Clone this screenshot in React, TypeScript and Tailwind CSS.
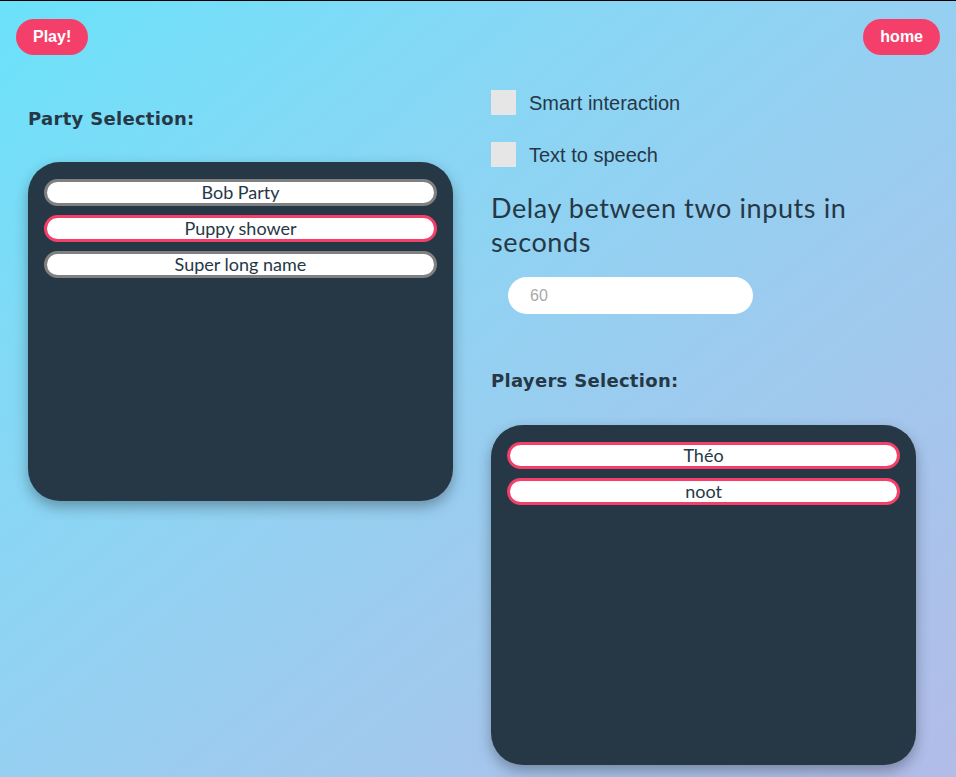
import React from 'react';

const parties = [
  { name: 'Bob Party', selected: false },
  { name: 'Puppy shower', selected: true },
  { name: 'Super long name', selected: false },
];

const players = [
  { name: 'Théo', selected: true },
  { name: 'noot', selected: true },
];

const ListItem: React.FC<{ name: string; selected: boolean }> = ({ name, selected }) => (
  <div
    className={`h-[27px] rounded-full bg-white border-[3px] flex items-center justify-center text-[18px] text-[#263846] ${
      selected ? 'border-[#f43f6a]' : 'border-[#808080]'
    }`}
  >
    {name}
  </div>
);

const Panel: React.FC<{ items: { name: string; selected: boolean }[]; height: string }> = ({ items, height }) => (
  <div className={`w-[425px] ${height} bg-[#263846] rounded-[32px] shadow-[0_6px_14px_rgba(0,0,0,0.3)] px-4 pt-[17px] flex flex-col gap-[9px]`}>
    {items.map(i => (
      <ListItem key={i.name} name={i.name} selected={i.selected} />
    ))}
  </div>
);

const Checkbox: React.FC<{ label: string }> = ({ label }) => (
  <div className="flex items-center h-[25px] gap-[13px]">
    <div className="w-[25px] h-[25px] bg-[#e6e6e6]" />
    <span className="text-[20px] text-[#263846] font-['Liberation_Sans',sans-serif]">{label}</span>
  </div>
);

export default function App() {
  return (
    <div className="min-h-[777px] border-t border-black bg-gradient-to-br from-[#6ae2fa] to-[#b2bce8] font-['Lato',sans-serif] text-[#263846]">
      <div className="flex justify-between px-4 pt-[18px]">
        <button className="h-9 px-[17px] rounded-full bg-[#f43f6a] text-white font-bold text-[16px] font-['Liberation_Sans',sans-serif]">
          Play!
        </button>
        <button className="h-9 px-[17px] rounded-full bg-[#f43f6a] text-white font-bold text-[16px] font-['Liberation_Sans',sans-serif]">
          home
        </button>
      </div>

      <div className="flex items-start px-[28px] gap-[38px]">
        <div className="flex flex-col mt-[51px]">
          <h2 className="h-[26px] leading-[26px] text-[18px] font-bold font-['DejaVu_Sans',sans-serif] tracking-[0.3px]">
            Party Selection:
          </h2>
          <div className="mt-[30px]">
            <Panel items={parties} height="h-[339px]" />
          </div>
        </div>

        <div className="flex flex-col mt-[35px] w-[425px]">
          <div className="flex flex-col gap-[27px]">
            <Checkbox label="Smart interaction" />
            <Checkbox label="Text to speech" />
          </div>
          <p className="mt-[24px] text-[27px] leading-[34px] tracking-[0.6px] pr-[30px]">
            Delay between two inputs in seconds
          </p>
          <input
            className="mt-[18px] ml-[17px] w-[245px] h-[37px] rounded-full bg-white px-[22px] text-[16px] outline-none placeholder:text-[#a9a9a9] font-['Liberation_Sans',sans-serif]"
            placeholder="60"
          />
          <h2 className="mt-[54px] h-[26px] leading-[26px] text-[18px] font-bold font-['DejaVu_Sans',sans-serif] tracking-[0.3px]">
            Players Selection:
          </h2>
          <div className="mt-[31px]">
            <Panel items={players} height="h-[340px]" />
          </div>
        </div>
      </div>
    </div>
  );
}
